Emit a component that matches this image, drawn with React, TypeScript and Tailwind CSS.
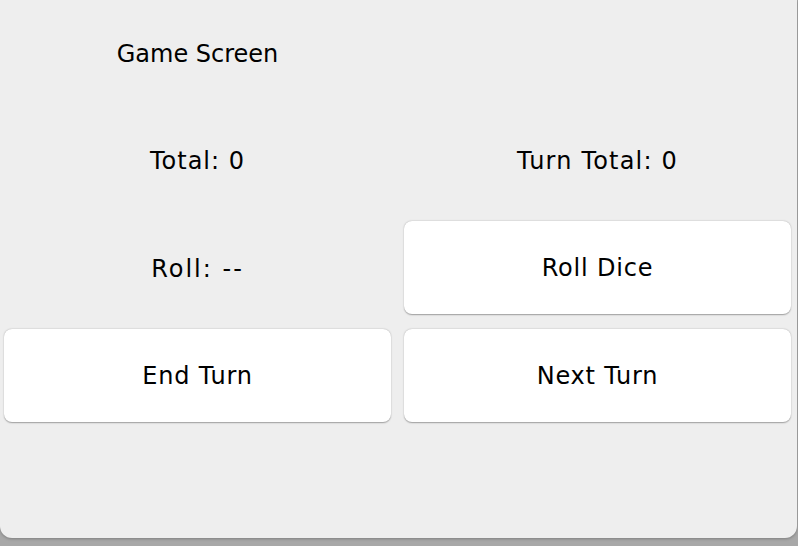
export default function App() {
  const btn =
    'mt-[6px] h-[93px] w-full rounded-[8px] bg-white text-[24px] tracking-[0.8px] text-black shadow-[0_0.5px_1.5px_rgba(0,0,0,0.35)] flex items-center justify-center';

  return (
    <div className="h-[546px] w-[798px] bg-[#a8a8a8] font-['DejaVu_Sans',sans-serif] overflow-hidden">
      <div className="h-[538px] w-[797px] rounded-b-[12px] bg-[#eeeeee] shadow-[0_1px_3px_rgba(0,0,0,0.25)]">
        <div className="grid grid-cols-[387px_387px] grid-rows-[107px_108px_108px_108px] gap-x-[13px] px-[4px] text-[24px] text-black">
          <div className="flex items-center justify-center pt-[1px]">Game Screen</div>
          <div />
          <div className="flex items-center justify-center tracking-[1px]">Total: 0</div>
          <div className="flex items-center justify-center tracking-[1.2px]">Turn Total: 0</div>
          <div className="flex items-center justify-center tracking-[2px]">Roll: --</div>
          <div>
            <button className={btn}>Roll Dice</button>
          </div>
          <div>
            <button className={btn}>End Turn</button>
          </div>
          <div>
            <button className={btn}>Next Turn</button>
          </div>
        </div>
      </div>
    </div>
  );
}
